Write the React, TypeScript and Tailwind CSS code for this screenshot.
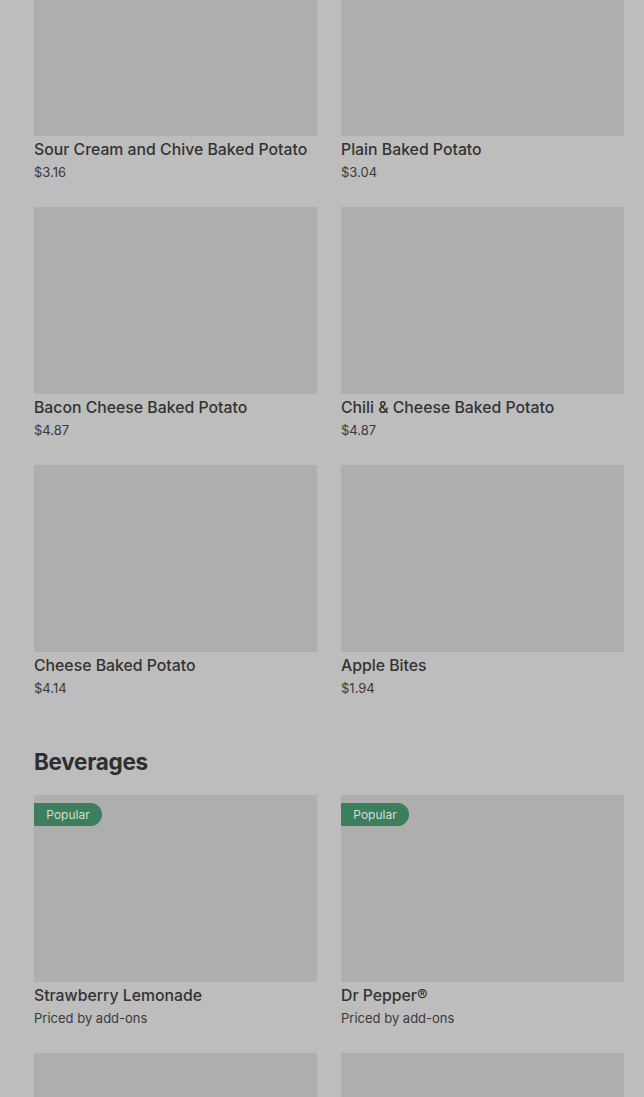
import React from 'react';

type Item = { name: string; price: string; popular?: boolean };

const potatoes: Item[] = [
  { name: 'Sour Cream and Chive Baked Potato', price: '$3.16' },
  { name: 'Plain Baked Potato', price: '$3.04' },
  { name: 'Bacon Cheese Baked Potato', price: '$4.87' },
  { name: 'Chili & Cheese Baked Potato', price: '$4.87' },
  { name: 'Cheese Baked Potato', price: '$4.14' },
  { name: 'Apple Bites', price: '$1.94' },
];

const beverages: Item[] = [
  { name: 'Strawberry Lemonade', price: 'Priced by add-ons', popular: true },
  { name: 'Dr Pepper®', price: 'Priced by add-ons', popular: true },
  { name: '', price: '' },
  { name: '', price: '' },
];

const ItemCard: React.FC<{ item: Item }> = ({ item }) => (
  <div className="flex flex-col">
    <div className="relative h-[187px] w-full bg-[#aeaeae]">
      {item.popular && (
        <span className="absolute left-0 top-[8px] flex h-[23px] w-[68px] items-center justify-center rounded-r-full bg-[#3d7e5d] text-[12px] text-[#d3ddd6]">
          Popular
        </span>
      )}
    </div>
    <h3 className="mt-[4px] whitespace-nowrap text-[15.8px] font-medium leading-5 text-[#333333]">{item.name}</h3>
    <p className="mt-[2px] text-[13px] leading-5 text-[#3a3a3a]">{item.price}</p>
  </div>
);

export default function App() {
  return (
    <div className="h-[1097px] w-full overflow-hidden bg-[#bdbdbd] pl-[34px] pr-[20px] font-['Inter',_'Liberation_Sans',_sans-serif]">
      {/* menu items, scrolled partway */}
      <section className="mt-[-51px] grid grid-cols-2 gap-x-[24px] gap-y-[25px]">
        {potatoes.map((p) => (
          <ItemCard key={p.name} item={p} />
        ))}
      </section>

      <h2 className="mt-[48px] text-[22.5px] font-bold leading-8 tracking-[-0.3px] text-[#2e2e2e]">Beverages</h2>

      <section className="mt-[17px] grid grid-cols-2 gap-x-[24px] gap-y-[25px]">
        {beverages.map((b, i) => (
          <ItemCard key={i} item={b} />
        ))}
      </section>
    </div>
  );
}
